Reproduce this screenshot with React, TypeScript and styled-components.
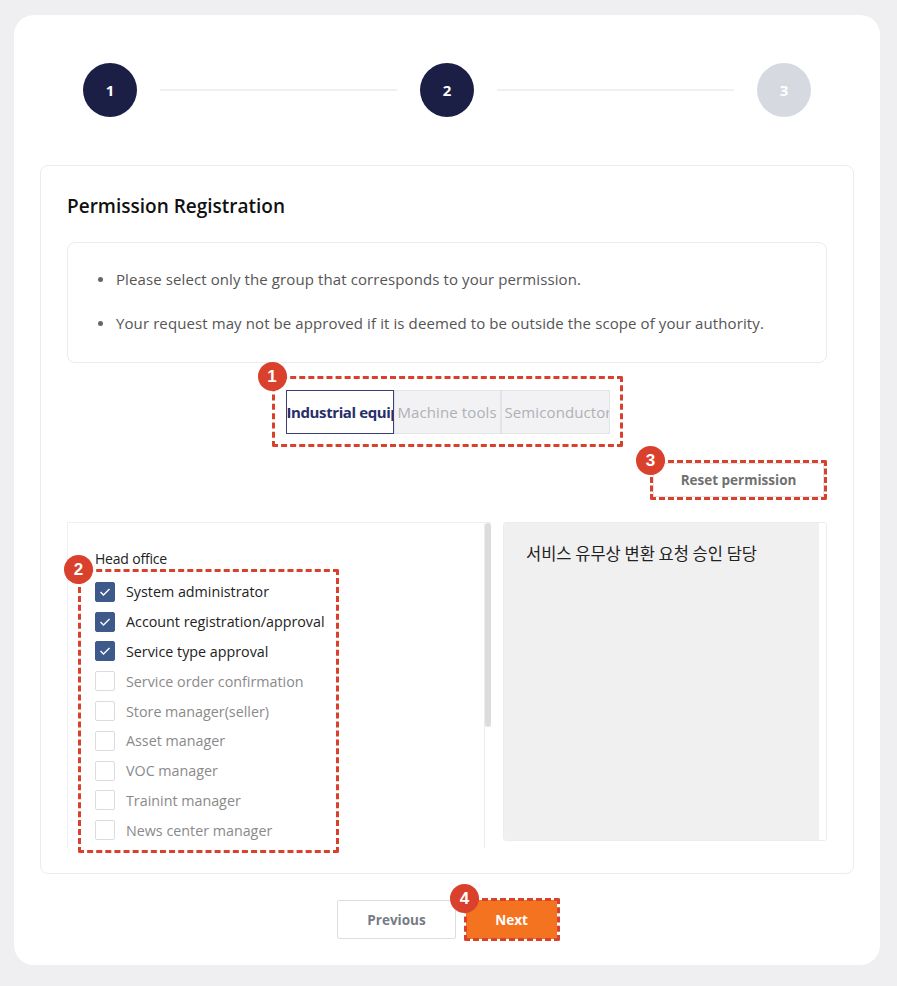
import React from "react";
import styled, { createGlobalStyle } from "styled-components";

const Global = createGlobalStyle`
  html, body { margin: 0; padding: 0; }
  body {
    background: #efeff1;
    font-family: "Open Sans", "Noto Sans CJK KR", sans-serif;
  }
`;

const RED = "#d9412d";

const Page = styled.div`
  padding: 15px 17px 21px 14px;
`;

const Card = styled.div`
  background: #fff;
  border-radius: 20px;
  height: 950px;
  box-sizing: border-box;
  padding: 48px 26px 0 26px;
  display: flex;
  flex-direction: column;
`;

const Stepper = styled.div`
  display: flex;
  align-items: center;
  padding: 0 43px 0 43px;
  gap: 23px;
`;

const StepCircle = styled.div<{ $active: boolean }>`
  width: 54px;
  height: 54px;
  border-radius: 50%;
  flex: none;
  display: flex;
  align-items: center;
  justify-content: center;
  background: ${(p) => (p.$active ? "#1b1e45" : "#d6dae0")};
  color: #fff;
  font-weight: 700;
  font-size: 15px;
`;

const StepLine = styled.div`
  flex: 1;
  height: 2px;
  background: #eff0f3;
`;

const Panel = styled.div`
  margin-top: 48px;
  border: 1px solid #ececee;
  border-radius: 8px;
  height: 709px;
  box-sizing: border-box;
  padding: 27px 26px 0 26px;
  display: flex;
  flex-direction: column;
`;

const Title = styled.h2`
  margin: 0;
  font-size: 19px;
  font-weight: 600;
  color: #111;
  line-height: 26px;
`;

const InfoBox = styled.div`
  margin-top: 23px;
  border: 1px solid #ececee;
  border-radius: 8px;
  height: 121px;
  box-sizing: border-box;
  padding: 24px 0 0 30px;
`;

const InfoList = styled.ul`
  margin: 0;
  padding: 0;
  list-style: none;
  display: flex;
  flex-direction: column;
  gap: 20px;
`;

const InfoItem = styled.li`
  display: flex;
  align-items: center;
  gap: 13px;
  color: #555;
  font-size: 15px;
  line-height: 24px;
  letter-spacing: 0.1px;
  &::before {
    content: "";
    width: 5px;
    height: 5px;
    border-radius: 50%;
    background: #666;
    flex: none;
  }
`;

const TabsRow = styled.div`
  display: flex;
  justify-content: center;
  margin-top: 13px;
`;

const Annot = styled.div<{ $pad: string }>`
  position: relative;
  padding: ${(p) => p.$pad};
`;

const Frame = styled.div`
  position: absolute;
  inset: 0;
  border: 3px dashed ${RED};
  border-radius: 2px;
  pointer-events: none;
`;

const Badge = styled.div`
  position: absolute;
  left: -14px;
  top: -14px;
  width: 29px;
  height: 29px;
  border-radius: 50%;
  background: ${RED};
  color: #fff;
  font-weight: 700;
  font-size: 17px;
  display: flex;
  align-items: center;
  justify-content: center;
  z-index: 2;
  font-family: "Liberation Sans", Arial, sans-serif;
`;

const Tabs = styled.div`
  display: flex;
`;

const Tab = styled.div<{ $active: boolean; $w: number }>`
  width: ${(p) => p.$w}px;
  height: 44px;
  box-sizing: border-box;
  display: flex;
  align-items: center;
  white-space: nowrap;
  overflow: hidden;
  font-size: 15px;
  letter-spacing: ${(p) => (p.$active ? "-0.4px" : "0.1px")};
  border: 1px solid ${(p) => (p.$active ? "#3a3f7a" : "#e2e3e6")};
  background: ${(p) => (p.$active ? "#fff" : "#f2f2f4")};
  color: ${(p) => (p.$active ? "#282d6b" : "#b0b0b4")};
  font-weight: ${(p) => (p.$active ? 700 : 500)};
  padding-left: ${(p) => (p.$active ? "0" : "3px")};
`;

const ResetRow = styled.div`
  display: flex;
  justify-content: flex-end;
  margin-top: 13px;
`;

const ResetButton = styled.button`
  display: block;
  width: 171px;
  height: 34px;
  background: #fff;
  border: 1px solid #e5e5e5;
  font-family: inherit;
  font-size: 13.5px;
  font-weight: 700;
  color: #707070;
`;

const Columns = styled.div`
  display: flex;
  margin-top: 22px;
  gap: 12px;
`;

const ListPanel = styled.div`
  position: relative;
  width: 424px;
  height: 326px;
  flex: none;
`;

const ListScroll = styled.div`
  height: 100%;
  box-sizing: border-box;
  border-top: 1px solid #efefef;
  border-left: 1px solid #efefef;
  display: flex;
  overflow: hidden;
`;

const ListContent = styled.div`
  flex: 1;
  padding: 27px 0 0 27px;
`;

const Track = styled.div`
  width: 6px;
  flex: none;
  border-left: 1px solid #ececec;
`;

const Thumb = styled.div`
  width: 6px;
  height: 204px;
  background: #dcdcdc;
  border-radius: 3px;
`;

const GroupLabel = styled.div`
  font-size: 14px;
  color: #222;
  line-height: 18px;
  margin-bottom: 9px;
  letter-spacing: -0.2px;
`;

const Item = styled.label<{ $checked: boolean }>`
  display: flex;
  align-items: center;
  gap: 11px;
  height: 29.8px;
  font-size: 14.3px;
  color: ${(p) => (p.$checked ? "#222" : "#8a8a8a")};
`;

const Box = styled.span<{ $checked: boolean }>`
  width: 20px;
  height: 20px;
  box-sizing: border-box;
  border-radius: 2px;
  flex: none;
  display: flex;
  align-items: center;
  justify-content: center;
  background: ${(p) => (p.$checked ? "#3e5a8b" : "#fff")};
  border: 1px solid ${(p) => (p.$checked ? "#3e5a8b" : "#dcdcdc")};
`;

const ListFrame = styled.div`
  position: absolute;
  left: 11px;
  top: 47px;
  width: 261px;
  height: 284px;
`;

const DescPanel = styled.div`
  width: 324px;
  height: 319px;
  box-sizing: border-box;
  border: 1px solid #ececec;
  border-radius: 3px;
  display: flex;
  overflow: hidden;
`;

const DescBody = styled.div`
  flex: 1;
  background: #f0f0f0;
  padding: 18px 0 0 22px;
  font-size: 16.5px;
  color: #222;
  font-family: "Noto Sans CJK KR", sans-serif;
`;

const DescTrack = styled.div`
  width: 7px;
  background: #fff;
`;

const Footer = styled.div`
  display: flex;
  justify-content: center;
  align-items: center;
  gap: 8px;
  margin-top: 24px;
  padding-left: 3px;
`;

const PrevButton = styled.button`
  width: 119px;
  height: 39px;
  background: #fff;
  border: 1px solid #dcdde0;
  border-radius: 2px;
  font-family: inherit;
  font-size: 13.5px;
  font-weight: 700;
  color: #767b85;
`;

const NextButton = styled.button`
  display: block;
  width: 91px;
  height: 39px;
  background: #f47321;
  border: none;
  border-radius: 2px;
  font-family: inherit;
  font-size: 13.5px;
  font-weight: 700;
  color: #fff;
`;

const Check = () => (
  <svg width="12" height="10" viewBox="0 0 12 10">
    <polyline points="1.5,5 4.5,8 10.5,2" fill="none" stroke="#fff" strokeWidth="1.4" />
  </svg>
);

const items: [string, boolean][] = [
  ["System administrator", true],
  ["Account registration/approval", true],
  ["Service type approval", true],
  ["Service order confirmation", false],
  ["Store manager(seller)", false],
  ["Asset manager", false],
  ["VOC manager", false],
  ["Trainint manager", false],
  ["News center manager", false],
];

export default function App() {
  return (
    <>
      <Global />
      <Page>
        <Card>
          <Stepper>
            <StepCircle $active>1</StepCircle>
            <StepLine />
            <StepCircle $active>2</StepCircle>
            <StepLine />
            <StepCircle $active={false}>3</StepCircle>
          </Stepper>
          <Panel>
            <Title>Permission Registration</Title>
            <InfoBox>
              <InfoList>
                <InfoItem>Please select only the group that corresponds to your permission.</InfoItem>
                <InfoItem>Your request may not be approved if it is deemed to be outside the scope of your authority.</InfoItem>
              </InfoList>
            </InfoBox>
            <TabsRow>
              <Annot $pad="14px 13px 13px 14px">
                <Tabs>
                  <Tab $active $w={108}>Industrial equipment</Tab>
                  <Tab $active={false} $w={107}>Machine tools</Tab>
                  <Tab $active={false} $w={109}>Semiconductor</Tab>
                </Tabs>
                <Frame />
                <Badge>1</Badge>
              </Annot>
            </TabsRow>
            <ResetRow>
              <Annot $pad="3px">
                <ResetButton>Reset permission</ResetButton>
                <Frame />
                <Badge>3</Badge>
              </Annot>
            </ResetRow>
            <Columns>
              <ListPanel>
                <ListScroll>
                  <ListContent>
                    <GroupLabel>Head office</GroupLabel>
                    {items.map(([label, checked]) => (
                      <Item key={label} $checked={checked}>
                        <Box $checked={checked}>{checked && <Check />}</Box>
                        {label}
                      </Item>
                    ))}
                  </ListContent>
                  <Track>
                    <Thumb />
                  </Track>
                </ListScroll>
                <ListFrame>
                  <Frame />
                  <Badge>2</Badge>
                </ListFrame>
              </ListPanel>
              <DescPanel>
                <DescBody>서비스 유무상 변환 요청 승인 담당</DescBody>
                <DescTrack />
              </DescPanel>
            </Columns>
          </Panel>
          <Footer>
            <PrevButton>Previous</PrevButton>
            <Annot $pad="2px 3px 2px 2px">
              <NextButton>Next</NextButton>
              <Frame />
              <Badge>4</Badge>
            </Annot>
          </Footer>
        </Card>
      </Page>
    </>
  );
}
